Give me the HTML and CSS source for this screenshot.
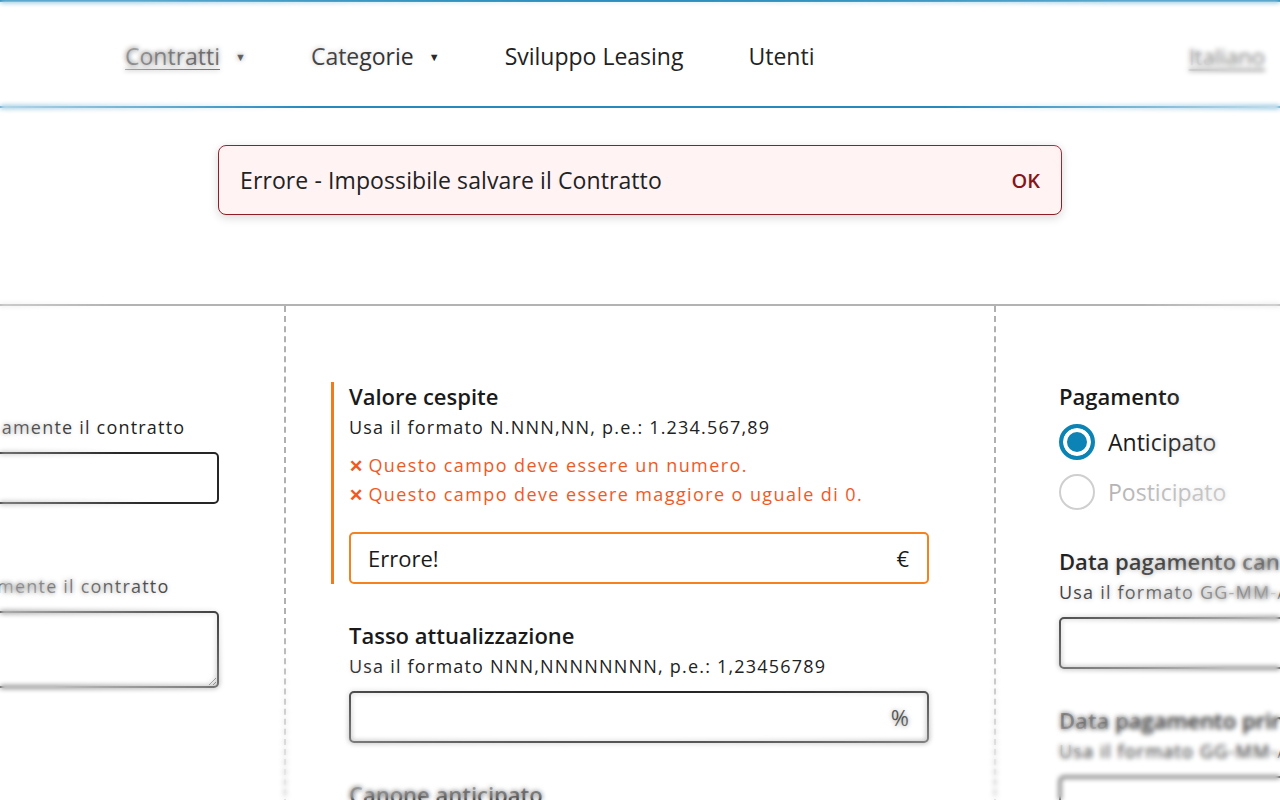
FILE: index.html
```html
<!DOCTYPE html>
<html lang="it">
<head>
  <meta charset="UTF-8">
  <title>Contratti - Leasing</title>
  <link rel="stylesheet" href="styles.css">
</head>
<body>

  <header class="topbar">
    <nav class="nav">
      <a class="nav-item active" href="#"><span class="nav-text">Contratti</span><span class="caret">&#9660;</span></a>
      <a class="nav-item" href="#"><span class="nav-text">Categorie</span><span class="caret">&#9660;</span></a>
      <a class="nav-item" href="#"><span class="nav-text">Sviluppo Leasing</span></a>
      <a class="nav-item" href="#"><span class="nav-text">Utenti</span></a>
      <a class="lang" href="#">Italiano</a>
    </nav>
  </header>

  <div class="alert">
    <span class="alert-text">Errore - Impossibile salvare il Contratto</span>
    <button class="alert-ok">OK</button>
  </div>

  <main class="form">
    <section class="col">
      <div class="field">
        <label class="label">Nome</label>
        <p class="help">Inserisci un titolo che identifichi rapidamente il contratto</p>
        <div class="input"><span class="value"></span></div>
      </div>
      <div class="field">
        <label class="label">Descrizione</label>
        <p class="help">Inserisci una frase che descriva brevemente il contratto</p>
        <textarea class="textarea"></textarea>
      </div>
    </section>

    <section class="col">
      <div class="field invalid">
        <label class="label">Valore cespite</label>
        <p class="help">Usa il formato N.NNN,NN, p.e.: 1.234.567,89</p>
        <ul class="errors">
          <li><span class="x">&#10005;</span>Questo campo deve essere un numero.</li>
          <li><span class="x">&#10005;</span>Questo campo deve essere maggiore o uguale di 0.</li>
        </ul>
        <div class="input"><span class="value">Errore!</span><span class="suffix">&euro;</span></div>
      </div>
      <div class="field">
        <label class="label">Tasso attualizzazione</label>
        <p class="help">Usa il formato NNN,NNNNNNNN, p.e.: 1,23456789</p>
        <div class="input"><span class="value"></span><span class="suffix">%</span></div>
      </div>
      <div class="field">
        <label class="label">Canone anticipato</label>
        <p class="help">Usa il formato N.NNN,NN, p.e.: 1.234.567,89</p>
        <div class="input"><span class="value"></span><span class="suffix">&euro;</span></div>
      </div>
    </section>

    <section class="col">
      <div class="field">
        <label class="label">Pagamento</label>
        <div class="radios">
          <div class="radio checked"><span class="dot"></span>Anticipato</div>
          <div class="radio disabled"><span class="dot"></span>Posticipato</div>
        </div>
      </div>
      <div class="field">
        <label class="label">Data pagamento canone anticipato</label>
        <p class="help">Usa il formato GG-MM-AAAA</p>
        <div class="input"><span class="value"></span></div>
      </div>
      <div class="field">
        <label class="label">Data pagamento prima rata</label>
        <p class="help">Usa il formato GG-MM-AAAA</p>
        <div class="input"><span class="value"></span></div>
      </div>
    </section>
  </main>

  <!-- soft focus round the edges of the shot -->
  <div class="lens"></div>

</body>
</html>
```

FILE: styles.css
```css
body {
  margin: 0;
  font-family: 'Open Sans', 'Noto Sans', sans-serif;
  color: #1e1e1e;
  background: #fff;
  overflow: hidden;
  height: 100vh;
}

/* Top bar */
.topbar {
  border-top: 2px solid #1d87b9;
  border-bottom: 2px solid #2589bd;
}

.nav {
  display: flex;
  align-items: center;
  gap: 65px;
  height: 104px;
  box-sizing: border-box;
  padding: 4px 15px 0 125px;
}

.nav-item {
  font-size: 23px;
  color: #222;
  text-decoration: none;
  display: flex;
  align-items: center;
}

.nav-item.active .nav-text {
  text-decoration: underline;
  text-underline-offset: 4px;
  text-decoration-thickness: 1px;
}

.caret {
  font-size: 11px;
  margin-left: 15px;
}

.lang {
  margin-left: auto;
  font-size: 22px;
  color: #777;
  text-decoration: underline;
  text-underline-offset: 4px;
}

/* Alert */
.alert {
  width: 844px;
  height: 70px;
  box-sizing: border-box;
  margin: 37px auto 0;
  padding: 0 21px 0 21px;
  display: flex;
  align-items: center;
  justify-content: space-between;
  background: #fff3f4;
  border: 1.5px solid #8e1d26;
  border-radius: 8px;
  box-shadow: 0 3px 10px rgba(0, 0, 0, 0.15);
}

.alert-text {
  font-size: 23px;
  letter-spacing: 0.1px;
  color: #222;
}

.alert-ok {
  border: none;
  background: none;
  padding: 0;
  font-family: inherit;
  font-size: 20px;
  font-weight: 600;
  color: #861519;
  cursor: pointer;
}

/* Form columns */
.form {
  margin: 89px 0 0 -426px;
  border-top: 2px solid #b3b3b3;
  display: grid;
  grid-template-columns: 710px 710px 710px;
  height: 600px;
}

.col {
  padding: 76px 65px 0 65px;
  display: flex;
  flex-direction: column;
  gap: 37px;
}

.col + .col {
  border-left: 2px dashed #b0b0b0;
  padding-left: 63px;
}

.field {
  display: flex;
  flex-direction: column;
}

.field.invalid {
  margin-left: -18px;
  padding-left: 15px;
  border-left: 3px solid #f47a1e;
}

.label {
  font-size: 22px;
  font-weight: 600;
  line-height: 28px;
  color: #1a1a1a;
}

.help {
  margin: 3px 0 0;
  font-size: 18px;
  line-height: 28px;
  letter-spacing: 1.2px;
  color: #222;
}

.errors {
  list-style: none;
  margin: 10px 0 0;
  padding: 0;
  color: #f2591f;
  font-size: 18px;
  line-height: 29px;
  letter-spacing: 1.4px;
}

.x {
  font-weight: 700;
  font-size: 17px;
  margin-right: 4px;
}

.input {
  margin-top: 11px;
  height: 52px;
  box-sizing: border-box;
  border: 2px solid #262626;
  border-radius: 5px;
  display: flex;
  align-items: center;
  justify-content: space-between;
  padding: 0 17px 0 17px;
  font-size: 22px;
  color: #1a1a1a;
}

.suffix {
  padding-right: 1px;
}

.invalid .input {
  margin-top: 23px;
  border-color: #f4821f;
}

.textarea {
  margin-top: 11px;
  height: 77px;
  box-sizing: border-box;
  border: 2px solid #262626;
  border-radius: 5px;
  resize: vertical;
  font-family: inherit;
  font-size: 20px;
}

/* Radios */
.radios {
  display: flex;
  flex-direction: column;
  gap: 14px;
  margin-top: 14px;
}

.radio {
  display: flex;
  align-items: center;
  gap: 13px;
  font-size: 23px;
  height: 36px;
  color: #1a1a1a;
}

.radio .dot {
  width: 36px;
  height: 36px;
  box-sizing: border-box;
  border-radius: 50%;
  border: 2px solid #cfcfcf;
  background: #fff;
}

.radio.checked .dot {
  border: 4px solid #0b83b4;
  background: #0b83b4;
  box-shadow: inset 0 0 0 4px #fff;
}

.radio.disabled {
  color: #b5b5b5;
}

/* Soft focus */
.lens {
  position: fixed;
  inset: 0;
  pointer-events: none;
  backdrop-filter: blur(2.5px);
  -webkit-mask-image: radial-gradient(ellipse 60% 60% at 49% 46%, transparent 68%, #000 100%);
  mask-image: radial-gradient(ellipse 60% 60% at 49% 46%, transparent 68%, #000 100%);
}
```
